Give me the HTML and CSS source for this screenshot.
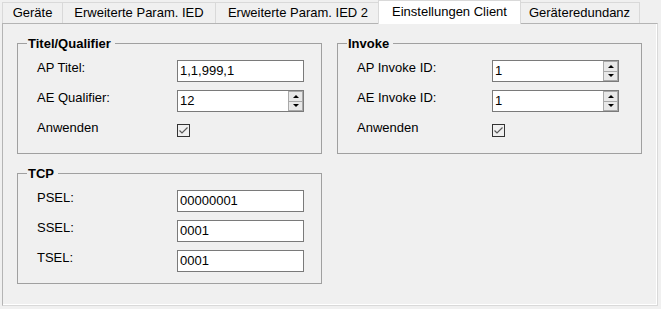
FILE: index.html
```html
<!DOCTYPE html>
<html>
<head lang="de">
    <meta charset="UTF-8">
    <title>Einstellungen Client</title>
    <link rel="stylesheet" href="styles.css">
</head>
<body>

<!-- Reiter -->
<div class="tabs">
    <div class="tab tab-geraete">Geräte</div>
    <div class="tab tab-ied">Erweiterte Param. IED</div>
    <div class="tab tab-ied2">Erweiterte Param. IED 2</div>
    <div class="tab tab-client active">Einstellungen Client</div>
    <div class="tab tab-redundanz">Geräteredundanz</div>
</div>

<!-- Seite -->
<div class="page">
    <fieldset class="group">
        <legend>Titel/Qualifier</legend>
        <div class="row">
            <span class="label">AP Titel:</span>
            <span class="field">1,1,999,1</span>
        </div>
        <div class="row">
            <span class="label">AE Qualifier:</span>
            <span class="field">12<span class="spinner"><i class="up"></i><i class="down"></i></span></span>
        </div>
        <div class="row">
            <span class="label">Anwenden</span>
            <span class="check"><svg width="11" height="11" viewBox="0 0 11 11"><path d="M1.5 5.5 L4 8 L9.5 2.5" fill="none" stroke="#5a5a5a" stroke-width="1.2"/></svg></span>
        </div>
    </fieldset>

    <fieldset class="group group-invoke">
        <legend>Invoke</legend>
        <div class="row">
            <span class="label">AP Invoke ID:</span>
            <span class="field">1<span class="spinner"><i class="up"></i><i class="down"></i></span></span>
        </div>
        <div class="row">
            <span class="label">AE Invoke ID:</span>
            <span class="field">1<span class="spinner"><i class="up"></i><i class="down"></i></span></span>
        </div>
        <div class="row">
            <span class="label">Anwenden</span>
            <span class="check"><svg width="11" height="11" viewBox="0 0 11 11"><path d="M1.5 5.5 L4 8 L9.5 2.5" fill="none" stroke="#5a5a5a" stroke-width="1.2"/></svg></span>
        </div>
    </fieldset>

    <fieldset class="group">
        <legend>TCP</legend>
        <div class="row">
            <span class="label">PSEL:</span>
            <span class="field">00000001</span>
        </div>
        <div class="row">
            <span class="label">SSEL:</span>
            <span class="field">0001</span>
        </div>
        <div class="row">
            <span class="label">TSEL:</span>
            <span class="field">0001</span>
        </div>
    </fieldset>
</div>

</body>
</html>
```

FILE: styles.css
```css
* {
    margin: 0;
    padding: 0;
    box-sizing: border-box;
}

body {
    background: #f0f0f0;
    font-family: "Liberation Sans", Arial, sans-serif;
    font-size: 13px;
    color: #000;
    width: 661px;
    height: 309px;
    overflow: hidden;
}

/* Reiter */
.tabs {
    display: flex;
    align-items: flex-end;
    height: 23px;
    padding-left: 2px;
}

.tab {
    height: 21px;
    line-height: 19px;
    text-align: center;
    background: #f0f0f0;
    border: 1px solid #d9d9d9;
    border-right: none;
    border-bottom: none;
    white-space: nowrap;
}

.tab-geraete { width: 60px; }
.tab-ied { width: 153px; }
.tab-ied2 { width: 165px; }
.tab-redundanz {
    width: 121px;
    border-right: 1px solid #d9d9d9;
}

.tab.active {
    position: relative;
    z-index: 1;
    width: 143px;
    height: 24px;
    line-height: 21px;
    margin: 0 -2px -1px -2px;
    background: #fff;
    border-right: 1px solid #d9d9d9;
}

/* Seite */
.page {
    margin-left: 2px;
    width: 656px;
    height: 283px;
    background: #f0f0f0;
    border: 1px solid #b4b4b4;
    border-right-color: #d9d9d9;
    border-bottom-color: #d9d9d9;
    box-shadow: inset -1px -1px 0 #fff;
    display: grid;
    grid-template-columns: 305px 305px;
    grid-auto-rows: 118px;
    column-gap: 15px;
    row-gap: 12px;
    padding: 12px 0 0 14px;
}

.group {
    border: 1px solid #a0a0a0;
    padding: 9px 0 0 19px;
    min-width: 0;
    height: 118px;
}

.group legend {
    font-weight: bold;
    line-height: 15px;
    padding: 0 4px 0 1px;
    margin-left: -10px;
}

.row {
    display: flex;
    align-items: flex-start;
    height: 22px;
    margin-bottom: 8px;
}

.label {
    width: 140px;
    line-height: 15px;
    flex: none;
}

.group-invoke .label {
    width: 135px;
}

.field {
    position: relative;
    width: 127px;
    height: 22px;
    line-height: 20px;
    padding-left: 2px;
    background: #fff;
    border: 1px solid #7a7a7a;
}

/* Pfeiltasten */
.spinner {
    position: absolute;
    top: 0;
    right: 0;
    width: 15px;
    height: 20px;
    display: flex;
    flex-direction: column;
    border: 1px solid #a9a9a9;
    background: #e8e8e8;
}

.spinner i {
    flex: 1;
    display: flex;
    align-items: center;
    justify-content: center;
}

.spinner i + i {
    border-top: 1px solid #a9a9a9;
}

.spinner i::after {
    content: "";
    border-left: 3px solid transparent;
    border-right: 3px solid transparent;
}

.spinner .up::after {
    border-bottom: 3px solid #000;
}

.spinner .down::after {
    border-top: 3px solid #000;
}

.check {
    width: 13px;
    height: 13px;
    margin-top: 4px;
    border: 1px solid #333;
    display: flex;
    align-items: center;
    justify-content: center;
}
```
